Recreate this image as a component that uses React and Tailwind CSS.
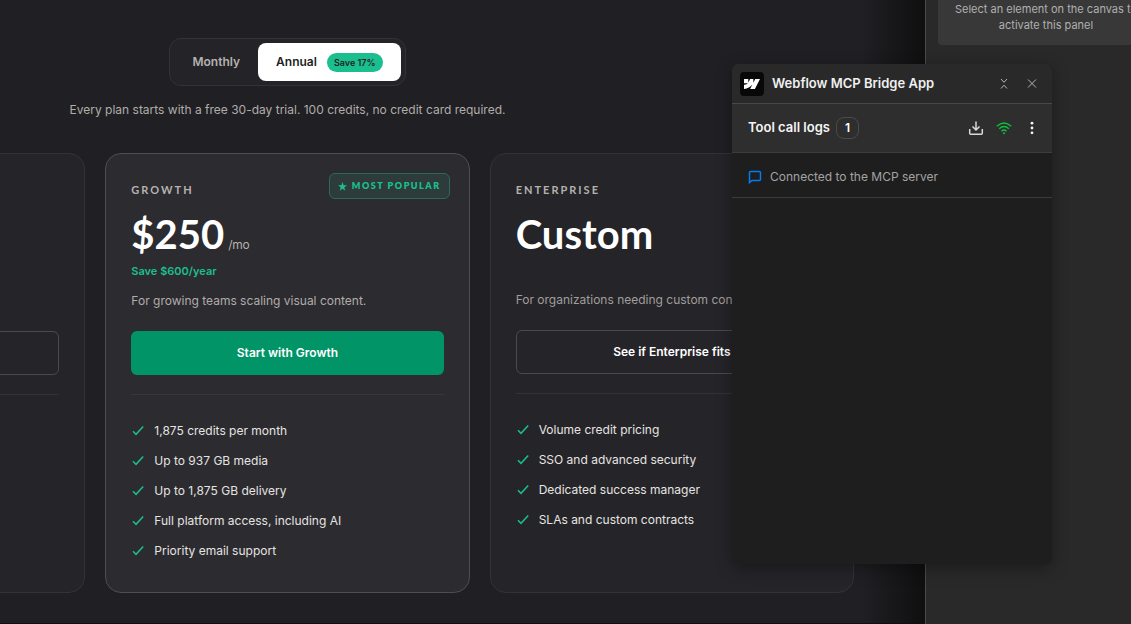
const checks = {
  growth: [
    '1,875 credits per month',
    'Up to 937 GB media',
    'Up to 1,875 GB delivery',
    'Full platform access, including AI',
    'Priority email support',
  ],
  enterprise: [
    'Volume credit pricing',
    'SSO and advanced security',
    'Dedicated success manager',
    'SLAs and custom contracts',
  ],
}

function CheckIcon() {
  return (
    <svg className="w-3 h-3 shrink-0" viewBox="0 0 12 12" fill="none" stroke="#1bbf8a" strokeWidth="1.5" aria-hidden="true">
      <path d="M1 6.3 L4 9.3 L11.2 1.4" />
    </svg>
  )
}

function FeatureList({ items }) {
  return (
    <ul className="flex flex-col gap-[10px] pt-[26px]">
      {items.map((item) => (
        <li key={item} className="flex items-center gap-[10px] pl-px h-5 text-xs text-[#e6e4e1]">
          <CheckIcon />
          <span>{item}</span>
        </li>
      ))}
    </ul>
  )
}

function Billing() {
  return (
    <div className="flex flex-col items-center">
      <div className="flex rounded-xl border border-[#333237] bg-[#242328] p-1 text-xs font-semibold">
        <button className="h-[38px] px-[18px] text-[#b5b2ae]">Monthly</button>
        <button className="flex h-[38px] items-center gap-[10px] rounded-lg bg-white px-[18px] text-[#201f24]">
          Annual
          <span className="rounded-full bg-[#1bbf8f] px-[7px] text-[9px] leading-[19px]">Save 17%</span>
        </button>
      </div>
      <p className="mt-[14px] text-xs leading-5 text-[#b0adaa]">
        Every plan starts with a free 30-day trial. 100 credits, no credit card required.
      </p>
    </div>
  )
}

function StarterCard() {
  return (
    <article className="rounded-2xl border border-[#333237] bg-[#252429] p-[25px] pt-[177px]">
      <button className="block h-11 w-full rounded-md border border-[#4a494e]" aria-label="Start"></button>
      <hr className="mt-[19px] border-[#333237]" />
    </article>
  )
}

function GrowthCard() {
  return (
    <article className="relative rounded-2xl border border-[#4e4d52] bg-[#2c2b30] p-[25px] pb-[31px]">
      <div className="absolute right-[19px] top-[19px] flex h-[26px] items-center gap-[5px] rounded-md border border-[#2b6a58] bg-[#2d3b3b] px-2 text-[#1bbf8f]">
        <svg className="w-[9px] h-[9px]" viewBox="0 0 24 24" fill="currentColor" aria-hidden="true">
          <path d="M12 0l3 8.6 9 .3-7.2 5.5 2.6 8.8L12 18l-7.4 5.2 2.6-8.8L0 8.9l9-.3z" />
        </svg>
        <span className="font-[Lato,sans-serif] text-[9px] font-extrabold tracking-[1.5px]">MOST POPULAR</span>
      </div>
      <h2 className="font-[Lato,sans-serif] text-[11px] font-bold leading-[22px] tracking-[2px] text-[#b5b2ae]">GROWTH</h2>
      <p className="mt-2 flex items-baseline gap-1 text-white">
        <span className="font-[Lato,sans-serif] text-[40px] font-bold leading-[50px]">$250</span>
        <span className="text-xs tracking-tight text-[#b5b2ae]">/mo</span>
      </p>
      <p className="mt-[2px] h-5 text-[11px] font-semibold leading-5 text-[#1bbf8f]">Save $600/year</p>
      <p className="mt-[10px] text-xs leading-5 text-[#b0adaa]">For growing teams scaling visual content.</p>
      <button className="mt-5 block h-11 w-full rounded-md bg-[#009466] text-xs font-semibold text-white">Start with Growth</button>
      <hr className="mt-[19px] border-[#38373c]" />
      <FeatureList items={checks.growth} />
    </article>
  )
}

function EnterpriseCard() {
  return (
    <article className="rounded-2xl border border-[#333237] bg-[#252429] p-[25px]">
      <h2 className="font-[Lato,sans-serif] text-[11px] font-bold leading-[22px] tracking-[2px] text-[#b5b2ae]">ENTERPRISE</h2>
      <p className="mt-2 font-[Lato,sans-serif] text-[40px] font-bold leading-[50px] text-white">Custom</p>
      <p className="mt-[31px] text-xs leading-5 text-[#a09e9b]">For organizations needing custom contracts.</p>
      <button className="mt-5 block h-11 w-full rounded-md border border-[#4a494e] text-xs font-semibold text-white">See if Enterprise fits</button>
      <hr className="mt-[19px] border-[#333237]" />
      <FeatureList items={checks.enterprise} />
    </article>
  )
}

function BridgePanel() {
  return (
    <section className="absolute right-[79px] top-16 flex h-[500px] w-80 flex-col overflow-hidden rounded-md bg-[#1e1e1e] shadow-[0_4px_16px_rgba(0,0,0,0.35)]">
      <header className="flex h-10 items-center border-b border-[#484848] bg-[#292929] px-2">
        <span className="flex h-6 w-6 items-center justify-center rounded bg-[#080808]">
          <svg className="w-4 h-4" viewBox="0 0 24 24" fill="white" aria-hidden="true">
            <path d="m24 4.515-7.658 14.97H9.149l3.205-6.204h-.144C9.566 16.713 5.621 18.973 0 19.485v-6.118s3.596-.213 5.71-2.435H0V4.515h6.417v5.278l.144-.001 2.622-5.277h4.854v5.244h.144l2.72-5.244H24Z" />
          </svg>
        </span>
        <h1 className="ml-2 flex-1 text-[13px] font-semibold text-[#f0f0f0]">Webflow MCP Bridge App</h1>
        <button className="p-1" aria-label="Collapse">
          <svg className="w-4 h-4" viewBox="0 0 16 16" fill="none" stroke="#b4b4b4" aria-hidden="true">
            <path d="M5 3 L8 6.3 L11 3 M5 12.5 L8 9.2 L11 12.5" />
          </svg>
        </button>
        <button className="ml-1 p-1" aria-label="Close">
          <svg className="w-4 h-4" viewBox="0 0 16 16" fill="none" stroke="#b4b4b4" aria-hidden="true">
            <path d="M4 3.5 L12 11.5 M12 3.5 L4 11.5" />
          </svg>
        </button>
      </header>
      <div className="flex h-[49px] items-center border-b border-[#3d3d3d] bg-[#2e2e2e] px-4">
        <h2 className="text-[13px] font-semibold text-[#f5f5f5]">Tool call logs</h2>
        <span className="ml-[6px] flex h-[22px] w-[23px] items-center justify-center rounded-lg border border-[#4b4b4b] text-xs font-semibold text-white">1</span>
        <div className="-mr-1 ml-auto flex items-center gap-3">
          <button aria-label="Download">
            <svg className="w-4 h-4" viewBox="0 0 16 16" fill="none" stroke="#d9d9d9" strokeWidth="1.5" aria-hidden="true">
              <path d="M8 1.5V10 M4.500 6.500L8 10l3.500-3.500 M1.700 9v4.300q0 1 1 1h10.600q1 0 1-1V9" />
            </svg>
          </button>
          <button aria-label="Connection">
            <svg className="w-4 h-4" viewBox="0 0 16 16" fill="none" stroke="#0bc53b" strokeWidth="1.4" aria-hidden="true">
              <path d="M.8 6.2Q8-.4 15.200 6.200 M3.200 8.700Q8 4.200 12.800 8.700 M5.500 11.200Q8 8.900 10.500 11.200" />
              <circle cx="8" cy="13.2" r="1" fill="#0bc53b" stroke="none" />
            </svg>
          </button>
          <button aria-label="More">
            <svg className="w-4 h-4" viewBox="0 0 16 16" fill="#f5f5f5" aria-hidden="true">
              <circle cx="8" cy="3.2" r="1.4" />
              <circle cx="8" cy="8" r="1.4" />
              <circle cx="8" cy="12.8" r="1.4" />
            </svg>
          </button>
        </div>
      </div>
      <div className="flex h-[45px] items-center gap-2 border-b border-[#3a3a3a] px-4 pt-[3px]">
        <svg className="w-[14px] h-[14px]" viewBox="0 0 14 14" fill="none" stroke="#007df0" strokeWidth="1.5" aria-hidden="true">
          <path d="M1.5 12.6V2.500q0-1 1-1h9q1 0 1 1v7q0 1-1 1H4z" />
        </svg>
        <p className="text-xs text-[#a3a3a3]">Connected to the MCP server</p>
      </div>
    </section>
  )
}

export default function App() {
  return (
    <div className="relative flex min-h-screen overflow-hidden bg-[#201f23] font-[Inter,sans-serif]">
      <main className="relative flex min-w-0 flex-1 justify-end overflow-hidden border-b border-[#120d12] pr-[71px] pt-[38px]">
        <div className="w-[1133px] shrink-0">
          <Billing />
          <div className="mt-[33px] grid grid-cols-3 gap-5">
            <StarterCard />
            <GrowthCard />
            <EnterpriseCard />
          </div>
        </div>
        <div className="absolute inset-y-0 right-0 w-16 bg-linear-to-r from-transparent to-[#0f0f10]"></div>
      </main>
      <aside className="w-[206px] shrink-0 overflow-hidden border-l border-[#4a4a4a] bg-[#292929] pl-3">
        <p className="w-[216px] rounded-b bg-[#383838] pb-3 pt-px text-center text-[11px] leading-4 text-[#b0b0b0]">
          Select an element on the canvas to<br />activate this panel
        </p>
      </aside>
      <BridgePanel />
    </div>
  )
}
